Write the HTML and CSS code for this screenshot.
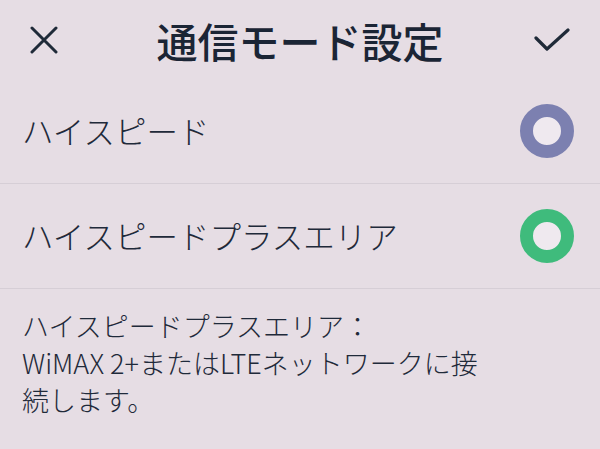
FILE: index.html
```html
<!DOCTYPE html>
<html lang="ja">
<head>
<meta charset="utf-8">
<link rel="stylesheet" href="styles.css">
</head>
<body>
<div class="screen">
  <header class="topbar">
    <span class="icon-btn">
      <svg width="28" height="28" viewBox="0 0 28 28"><path d="M2 2 L26 26 M26 2 L2 26" stroke="#1f2a38" stroke-width="3" fill="none" stroke-linecap="round"/></svg>
    </span>
    <h1 class="title">通信モード設定</h1>
    <span class="icon-btn">
      <svg width="36" height="24" viewBox="0 0 36 24"><path d="M2 10 L13 21 L34 2" stroke="#1f2a38" stroke-width="3.2" fill="none" stroke-linecap="round" stroke-linejoin="round"/></svg>
    </span>
  </header>
  <div class="row">
    <span class="label">ハイスピード</span>
    <span class="radio radio-off"></span>
  </div>
  <div class="row">
    <span class="label">ハイスピードプラスエリア</span>
    <span class="radio radio-on"></span>
  </div>
  <p class="desc">ハイスピードプラスエリア：<br>WiMAX 2+またはLTEネットワークに接<br>続します。</p>
</div>
</body>
</html>
```
FILE: styles.css
```css
html, body {
  margin: 0;
  padding: 0;
}
body {
  background: #e6dde4;
  font-family: "Noto Sans CJK JP", "Noto Sans", sans-serif;
  color: #243042;
}
.screen {
  width: 600px;
  height: 449px;
  overflow: hidden;
}
.topbar {
  height: 80px;
  display: flex;
  align-items: center;
  justify-content: space-between;
  padding: 0 30px 0 26px;
}
.icon-btn {
  display: flex;
  align-items: center;
  justify-content: center;
  width: 36px;
  height: 36px;
}
.title {
  margin: 0 0 0 4px;
  font-size: 41px;
  font-weight: 500;
  line-height: 1;
  color: #1b2535;
}
.row {
  height: 104px;
  display: flex;
  align-items: center;
  justify-content: space-between;
  padding: 0 26px 0 22px;
  border-bottom: 1px solid #d6ced6;
}
.row:first-of-type {
  height: 101px;
  padding-bottom: 2px;
}
.label {
  font-size: 31.5px;
  font-weight: 300;
  line-height: 1;
  color: #1f2a3a;
}
.radio {
  width: 28px;
  height: 28px;
  border-radius: 50%;
  border: 13px solid;
  background: #efe9ef;
}
.radio-off {
  border-color: #7c80b0;
}
.radio-on {
  border-color: #3fbb7c;
}
.desc {
  margin: 0;
  padding: 18px 22px 0;
  font-size: 27px;
  font-weight: 300;
  line-height: 37px;
  white-space: nowrap;
  color: #1f2a3a;
}
.desc-latin {
  letter-spacing: 0.5px;
}
```
